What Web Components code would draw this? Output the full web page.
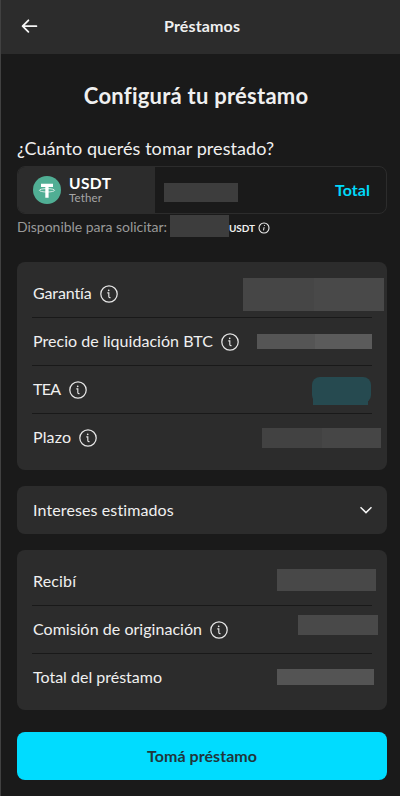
<!DOCTYPE html>
<html lang="es">
<head>
<meta charset="utf-8">
<title>Préstamos</title>
<style>
html,body{margin:0;background:#1a1a1a}
body{font-family:Lato,"Open Sans",sans-serif;color:#f0f0f0;font-size:16px}
</style>
</head>
<body>
<loan-page></loan-page>
<script>
const define = (name, html, init) => {
  const t = document.createElement('template');
  t.innerHTML = html;
  customElements.define(name, class extends HTMLElement {
    connectedCallback() {
      if (this.shadowRoot) return;
      this.attachShadow({mode: 'open'}).append(t.content.cloneNode(true));
      if (init) init.call(this, this.shadowRoot);
    }
  });
};

/* One line of text tracked to a given width */
define('text-line', `
<style>:host{display:inline-block;white-space:nowrap;line-height:1.2;flex:none}span{display:inline-block}</style>
<span><slot></slot></span>`, function (root) {
  const w = +this.getAttribute('width'), s = root.querySelector('span');
  const n = this.textContent.length;
  const gap = (w - s.getBoundingClientRect().width) / (n - 1);
  s.style.letterSpacing = gap.toFixed(3) + 'px';
  s.style.marginRight = (-gap).toFixed(3) + 'px';
});

define('info-icon', `
<style>:host{display:block;width:18px;height:18px;flex:none}svg{display:block;width:100%;height:100%}</style>
<svg viewBox="0 0 18 18" fill="none" stroke="#e6e6e6"><circle cx="9" cy="9" r="8.2" stroke-width="1.25"/><path d="M7.3 7.8h1.5v3.6q0 1.2 1 1.2h.7" stroke-width="1.15"/><circle cx="8.7" cy="5.3" r=".85" fill="#e6e6e6" stroke="none"/></svg>`);

define('info-icon-small', `
<style>:host{display:block;width:12px;height:12px;flex:none}svg{display:block}</style>
<svg width="12" height="12" viewBox="0 0 12 12" fill="none" stroke="#ececec"><circle cx="6" cy="6" r="5" stroke-width="1.1"/><path d="M6.1 5.2 5.5 8.4M6.5 3.2l-.1.8" stroke-width="1"/></svg>`);

define('hidden-value', `
<style>:host{display:block;flex:none;box-sizing:border-box}</style>`, function () {
  const [w, h, top, right] = this.getAttribute('box').split(' ');
  Object.assign(this.style, {width: w + 'px', height: h + 'px', marginTop: top + 'px',
    marginRight: (right || 0) + 'px', background: this.getAttribute('fill')});
});

define('rate-badge', `
<style>
:host{display:grid;width:59px;height:28px;margin:11px 1px 0 0;flex:none}
i{grid-area:1/1;background:#264a50}
.a{height:26px;border-radius:8px}
.b{margin:14px 3px 0 1px}
</style><i class="a"></i><i class="b"></i>`);

define('app-header', `
<style>
:host{display:grid;grid-template-columns:22px 1fr 20px;align-items:center;height:54px;padding:0 19px 2px 20px;box-sizing:border-box;background:#2c2c2c;font-weight:700}
svg{display:block}
div{text-align:center}
</style>
<svg width="18" height="16" viewBox="0 0 18 16" fill="none" stroke="#f5f5f5" stroke-width="1.8" stroke-linecap="round" stroke-linejoin="round"><path d="M15.4 8.2H1.8M7.4 2.3 1.6 8.2l5.8 5.7"/></svg>
<div><slot></slot></div>`);

define('panel-card', `
<style>:host{display:block;box-sizing:border-box;background:#2c2c2c;border-radius:8px;padding:8px 15px}</style><slot></slot>`);

define('detail-row', `
<style>
:host{display:flex;height:48px;box-sizing:border-box;border-bottom:1px solid #191919;justify-content:space-between;align-items:flex-start}
:host([last]){border-color:transparent}
.label{display:flex;gap:8px;align-items:center;height:47px;padding-left:1px}
::slotted(text-line){margin-bottom:1px}
</style>
<div class="label"><slot></slot></div><slot name="value"></slot>`);

define('amount-field', `
<style>
:host{display:flex;height:48px;box-sizing:border-box;border:1px solid #2c2c2c;border-radius:8px;overflow:hidden}
.asset{display:flex;width:137px;background:#2c2c2c;align-items:center;padding-left:15px;box-sizing:border-box;gap:8px}
.names{display:flex;flex-direction:column;padding-bottom:2px}
.names text-line{line-height:17px}
.names .sub{line-height:12px;font-size:11.5px;color:#a6a6a6}
.names .sym{font-size:15.5px;font-weight:700;color:#fff}
.value{display:flex;flex:1;padding:0 16px 0 9px;justify-content:space-between}
.total{align-self:center;font-weight:700;color:#00d9fa;margin-bottom:1px}
</style>
<div class="asset">
<svg width="28" height="28" viewBox="0 0 28 28"><circle cx="14" cy="14" r="14" fill="#50ae94"/><path d="M8 7.8h12v3.1h-4.4V21.8h-3.3V10.9H8z" fill="#fff"/><ellipse cx="14" cy="14.3" rx="7.6" ry="1.7" fill="none" stroke="#fff" stroke-width=".75"/></svg>
<div class="names"><text-line class="sym" width="42">USDT</text-line><text-line class="sub" width="33">Tether</text-line></div>
</div>
<div class="value"><hidden-value box="74 19 16" fill="#3d3d3d"></hidden-value><text-line class="total" width="35">Total</text-line></div>`);

define('primary-button', `
<style>:host{display:block}button{display:flex;width:100%;height:48px;border:0;border-radius:8px;background:#00dcff;color:#20363b;font:700 16px Lato,"Open Sans",sans-serif;align-items:center;justify-content:center;padding:0 0 1px}</style>
<button><slot></slot></button>`);

define('loan-page', `
<style>
:host{display:block;height:796px;box-sizing:border-box;border-left:1px solid #414141;background:#1a1a1a;overflow:hidden}
main{display:flex;flex-direction:column;padding:0 13px 0 16px}
h1{font-size:22px;line-height:28px;font-weight:700;margin:28px 0 0;text-align:center;padding-right:12px}
h1 text-line{line-height:28px}
.question{font-size:18px;line-height:22px;margin:27px 0 7px}
.question text-line,.available text-line{line-height:22px}
.available{display:flex;height:22px;margin-top:1px;font-size:14px;color:#999}
.available .left{margin-top:1px}
.available .unit{font-size:10px;font-weight:700;color:#f0f0f0;margin-top:2px}
.available info-icon-small{margin:7px 0 0 3.5px}
.first{margin-top:25px}.second{margin-top:16px;display:flex;height:48px;justify-content:space-between;align-items:center;padding:0 15px 0 16px}
.second text-line{margin-bottom:1px}
.third{margin-top:16px}
primary-button{margin-top:22px}
</style>
<app-header><text-line width="76">Préstamos</text-line></app-header>
<main>
<h1><text-line width="224">Configurá tu préstamo</text-line></h1>
<div class="question"><text-line width="257">¿Cuánto querés tomar prestado?</text-line></div>
<amount-field></amount-field>
<div class="available"><text-line class="left" width="150">Disponible para solicitar:</text-line><hidden-value box="59 22 0" fill="#3d3d3d" style="margin-left:3px"></hidden-value><text-line class="unit" width="26">USDT</text-line><info-icon-small></info-icon-small></div>
<panel-card class="first">
<detail-row><text-line width="59">Garantía</text-line><info-icon></info-icon><hidden-value slot="value" box="141 33 8 -12" fill="linear-gradient(90deg,#464646 71px,#494949 71px)"></hidden-value></detail-row>
<detail-row><text-line width="180">Precio de liquidación BTC</text-line><info-icon></info-icon><hidden-value slot="value" box="115 15 16" fill="linear-gradient(90deg,#555 58px,#5b5b5b 58px)"></hidden-value></detail-row>
<detail-row><text-line width="28">TEA</text-line><info-icon></info-icon><rate-badge slot="value"></rate-badge></detail-row>
<detail-row last><text-line width="38">Plazo</text-line><info-icon></info-icon><hidden-value slot="value" box="119 20 14 -9" fill="linear-gradient(90deg,#424242 60px,#464646 60px)"></hidden-value></detail-row>
</panel-card>
<panel-card class="second"><text-line width="141">Intereses estimados</text-line><svg width="12" height="8" viewBox="0 0 12 8" fill="none" stroke="#f5f5f5" stroke-width="1.5"><path d="M.5 1.2 6 6.6l5.5-5.4"/></svg></panel-card>
<panel-card class="third">
<detail-row><text-line width="43">Recibí</text-line><hidden-value slot="value" box="99 22 11 -4" fill="#484848"></hidden-value></detail-row>
<detail-row><text-line width="169">Comisión de originación</text-line><info-icon></info-icon><hidden-value slot="value" box="80 20 9 -6" fill="#494949"></hidden-value></detail-row>
<detail-row last><text-line width="129">Total del préstamo</text-line><hidden-value slot="value" box="97 16 15 -2" fill="#545454"></hidden-value></detail-row>
</panel-card>
<primary-button><text-line width="110">Tomá préstamo</text-line></primary-button>
</main>`);
</script>
</body>
</html>
